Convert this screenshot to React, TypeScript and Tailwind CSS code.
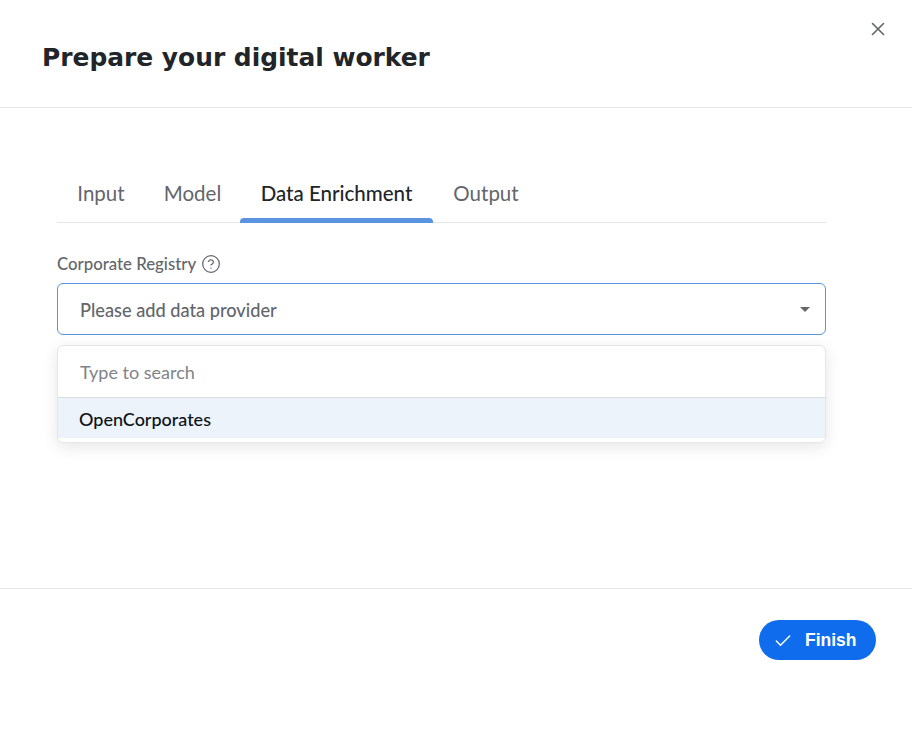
import { X, Check, CircleHelp } from 'lucide-react';

const uiFont = "font-['Lato',sans-serif]";

const tabs = [
  { label: 'Input', active: false, width: 'w-[88px]' },
  { label: 'Model', active: false, width: 'w-[95px]' },
  { label: 'Data Enrichment', active: true, width: 'w-[193px]' },
  { label: 'Output', active: false, width: 'w-[106px]' },
];

export default function App() {
  return (
    <div className={`relative flex h-[738px] w-[912px] flex-col overflow-hidden bg-white ${uiFont}`}>
      <button className="absolute right-[23px] top-[18px] text-[#63666b]">
        <X size={22} strokeWidth={1.75} />
      </button>

      <header className="flex h-[108px] shrink-0 items-center border-b border-[#e6e6e6] pl-[42px] pt-[8px]">
        <h1 className="font-['DejaVu_Sans',sans-serif] text-[24.9px] font-bold leading-[32px] text-[#212529]">
          Prepare your digital worker
        </h1>
      </header>

      <main className="h-[480px] shrink-0 px-[57px] pt-[65px]">
        <div className="w-[769px]">
          <nav className="flex h-[50px] border-b border-[#e6e6e6]">
            {tabs.map(tab => (
              <div
                key={tab.label}
                className={`relative flex h-[50px] items-center justify-center pb-[9px] text-[20.5px] ${tab.width} ${tab.active ? 'font-medium text-[#212529]' : 'text-[#63666b]'}`}
              >
                {tab.label}
                {tab.active && (
                  <span className="absolute inset-x-0 bottom-0 h-[5px] rounded-t-[4px] bg-[#5a93e0]" />
                )}
              </div>
            ))}
          </nav>

          <label className="mt-[30px] flex h-[22px] items-center gap-[5px] text-[16.8px] font-medium text-[#63666b]">
            <span className="pb-[1px]">Corporate Registry</span>
            <CircleHelp size={20} strokeWidth={1.5} />
          </label>

          <div className="mt-[8px] flex h-[52px] items-center justify-between rounded-[6px] border border-[#5a93e0] pl-[22px] pr-[15px] text-[18.2px] font-medium text-[#63666b]">
            <span className="pt-[4px]">Please add data provider</span>
            <span className="h-0 w-0 border-x-[5px] border-t-[5px] border-x-transparent border-t-[#63666b]" />
          </div>

          <div className="relative mt-[10px] overflow-hidden rounded-[6px] border border-[#e6e6e6] bg-white pb-[4px] shadow-[0_4px_16px_rgba(0,0,0,0.1)]">
            <div className="flex h-[52px] items-center border-b border-[#dcdcdc] pl-[22px] pt-[2px] text-[18px] text-[#808388]">
              Type to search
            </div>
            <div className="flex h-[40px] items-center bg-[#ecf3fb] pl-[21px] pt-[2px] text-[18px] font-medium text-[#0d1117]">
              OpenCorporates
            </div>
          </div>
        </div>
      </main>

      <footer className="flex flex-1 items-start justify-end border-t border-[#e6e6e6] pr-[36px] pt-[31px]">
        <button className="flex h-[40px] w-[117px] items-center gap-[12px] rounded-full bg-[#0f6ded] pl-[14px] pt-[1px] font-['Liberation_Sans',sans-serif] text-[17.5px] font-bold text-white">
          <Check size={20} strokeWidth={1.75} />
          Finish
        </button>
      </footer>
    </div>
  );
}
